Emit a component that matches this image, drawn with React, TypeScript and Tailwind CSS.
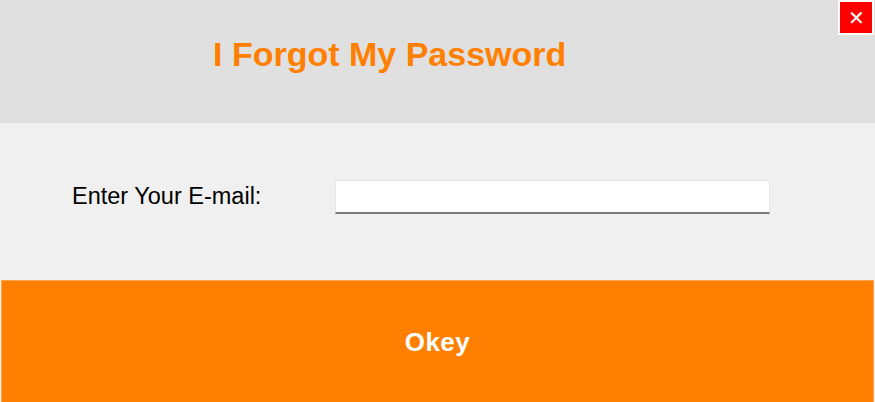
import React from "react";

export default function App() {
  return (
    <div
      className="relative w-[875px] h-[402px] overflow-hidden bg-[#f0f0f0] flex flex-col"
      style={{ fontFamily: '"Liberation Sans", Arial, sans-serif' }}
    >
      <div className="h-[123px] bg-[#e0e0e0] pl-[213px] pt-[37px] shrink-0">
        <div className="text-[34px] leading-[34px] font-bold text-[#ff8000] whitespace-nowrap">
          I Forgot My Password
        </div>
      </div>

      <div className="h-[157px] shrink-0 flex items-start pt-[57px] pl-[72px]">
        <div className="w-[263px] mt-[5px] text-[23.5px] leading-[23px] text-black whitespace-nowrap">
          Enter Your E-mail:
        </div>
        <input
          type="text"
          className="w-[435px] h-[34px] bg-white border border-[#e6e6e6] border-b-2 border-b-[#7a7a7a] outline-none"
        />
      </div>

      <button className="mx-[1px] h-[122px] shrink-0 bg-[#ff8000] border border-[#ffa64d] border-b-0 flex items-center justify-center">
        <span className="text-white font-bold text-[26px] leading-[26px] tracking-[0.5px]">
          Okey
        </span>
      </button>

      <div className="absolute top-0 right-[1px] w-[36px] h-[35px] border-2 border-white bg-white">
        <div className="w-full h-full bg-[#ff0000] flex items-center justify-center text-white text-[20px] leading-none">
          ✕
        </div>
      </div>
    </div>
  );
}
